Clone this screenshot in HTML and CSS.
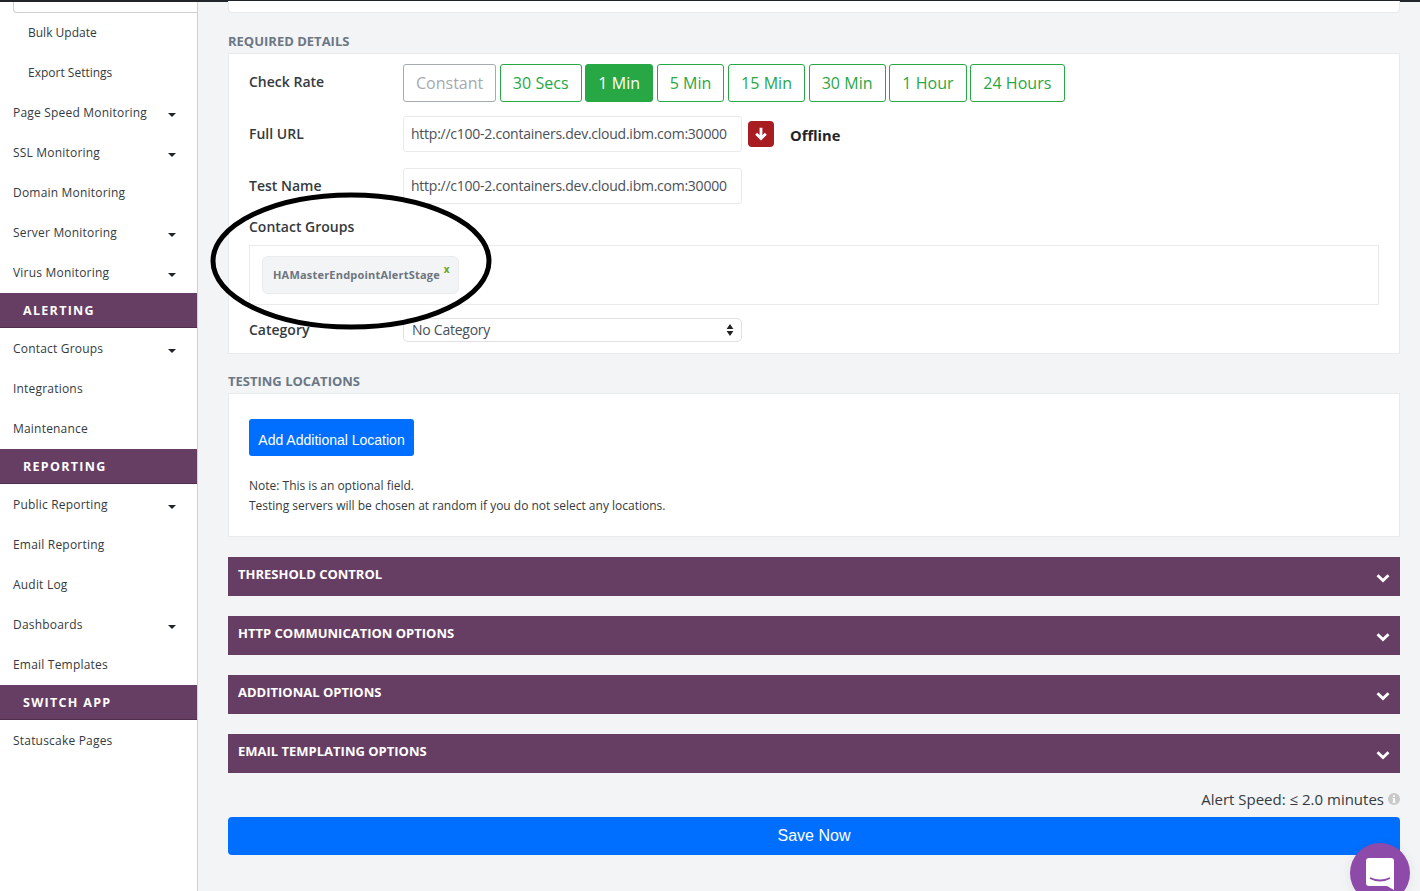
FILE: index.html
```html
<!DOCTYPE html>
<html>
<head>
    <title>New Uptime Test</title>
    <link rel="stylesheet" href="styles.css">
</head>
<body>
<div class="topline"></div>
<div class="page">
    <div class="sidebar">
        <div class="sidetab"></div>
        <a class="side-link sub">Bulk Update</a>
        <a class="side-link sub">Export Settings</a>
        <a class="side-link">Page Speed Monitoring<i class="caret"></i></a>
        <a class="side-link">SSL Monitoring<i class="caret"></i></a>
        <a class="side-link">Domain Monitoring</a>
        <a class="side-link">Server Monitoring<i class="caret"></i></a>
        <a class="side-link">Virus Monitoring<i class="caret"></i></a>
        <div class="side-head">ALERTING</div>
        <a class="side-link">Contact Groups<i class="caret"></i></a>
        <a class="side-link">Integrations</a>
        <a class="side-link">Maintenance</a>
        <div class="side-head">REPORTING</div>
        <a class="side-link">Public Reporting<i class="caret"></i></a>
        <a class="side-link">Email Reporting</a>
        <a class="side-link">Audit Log</a>
        <a class="side-link">Dashboards<i class="caret"></i></a>
        <a class="side-link">Email Templates</a>
        <div class="side-head">SWITCH APP</div>
        <a class="side-link">Statuscake Pages</a>
    </div>

    <div class="main">
        <div class="card stub"></div>

        <h5 class="section-title first">REQUIRED DETAILS</h5>
        <div class="card details">
            <div class="row rate-row">
                <label class="row-label">Check Rate</label>
                <div class="rates">
                    <button class="rate off">Constant</button>
                    <button class="rate">30 Secs</button>
                    <button class="rate on">1 Min</button>
                    <button class="rate">5 Min</button>
                    <button class="rate">15 Min</button>
                    <button class="rate">30 Min</button>
                    <button class="rate">1 Hour</button>
                    <button class="rate">24 Hours</button>
                </div>
            </div>
            <div class="row url-row">
                <label class="row-label">Full URL</label>
                <div class="text-input">http://c100-2.containers.dev.cloud.ibm.com:30000</div>
                <span class="status-icon">
                    <svg viewBox="0 0 14 14" width="14" height="14"><path d="M7 .8v10.4M2.2 6.8L7 11.6l4.8-4.8" fill="none" stroke="#fff" stroke-width="2.8"/></svg>
                </span>
                <span class="status-text">Offline</span>
            </div>
            <div class="row name-row">
                <label class="row-label">Test Name</label>
                <div class="text-input">http://c100-2.containers.dev.cloud.ibm.com:30000</div>
            </div>
            <label class="row-label block">Contact Groups</label>
            <div class="groups">
                <span class="chip">HAMasterEndpointAlertStage<sup class="chip-x">x</sup></span>
            </div>
            <div class="row cat-row">
                <label class="row-label">Category</label>
                <div class="select"><span class="select-text">No Category</span>
                    <svg class="updown" viewBox="0 0 8 12" width="8" height="12"><path d="M4 0l3.4 5H.6zM4 12L.6 7h6.8z" fill="#222"/></svg>
                </div>
            </div>
        </div>

        <h5 class="section-title">TESTING LOCATIONS</h5>
        <div class="card locations">
            <button class="add-btn">Add Additional Location</button>
            <p class="note">Note: This is an optional field.<br>Testing servers will be chosen at random if you do not select any locations.</p>
        </div>

        <div class="bar">THRESHOLD CONTROL<svg class="chev" viewBox="0 0 14 10" width="14" height="10"><path d="M1.5 2.2L7 7.6l5.5-5.4" fill="none" stroke="#fff" stroke-width="2.8"/></svg></div>
        <div class="bar">HTTP COMMUNICATION OPTIONS<svg class="chev" viewBox="0 0 14 10" width="14" height="10"><path d="M1.5 2.2L7 7.6l5.5-5.4" fill="none" stroke="#fff" stroke-width="2.8"/></svg></div>
        <div class="bar">ADDITIONAL OPTIONS<svg class="chev" viewBox="0 0 14 10" width="14" height="10"><path d="M1.5 2.2L7 7.6l5.5-5.4" fill="none" stroke="#fff" stroke-width="2.8"/></svg></div>
        <div class="bar">EMAIL TEMPLATING OPTIONS<svg class="chev" viewBox="0 0 14 10" width="14" height="10"><path d="M1.5 2.2L7 7.6l5.5-5.4" fill="none" stroke="#fff" stroke-width="2.8"/></svg></div>

        <div class="speed">Alert Speed: ≤ 2.0 minutes
            <svg viewBox="0 0 12 12" width="12" height="12"><circle cx="6" cy="6" r="6" fill="#c9c9c9"/><path d="M5 2.2h2v1.7H5zM4.6 5h2.4v3.7h.7v1H4.4v-1h.8V6h-.6z" fill="#fff"/></svg>
        </div>
        <button class="save-btn">Save Now</button>
    </div>
</div>

<!-- hand drawn circle over the screenshot -->
<svg class="scribble" viewBox="0 0 290 146" width="290" height="146">
    <ellipse cx="145" cy="73" rx="138" ry="66" fill="none" stroke="#000" stroke-width="5"/>
</svg>

<div class="chat">
    <svg viewBox="0 0 30 34" width="30" height="34"><path d="M4 1h22a3 3 0 0 1 3 3v29l-7-4H4a3 3 0 0 1-3-3V4a3 3 0 0 1 3-3z" fill="#fff"/><path d="M5 21c6 3.4 14 3.4 20 0" fill="none" stroke="#8e4aa8" stroke-width="2"/></svg>
</div>
</body>
</html>
```

FILE: styles.css
```css
* { box-sizing: border-box; }
html, body { margin: 0; padding: 0; height: 100%; overflow: hidden; }
body { background-color: #f3f4f6; font-family: "Open Sans", sans-serif; color: #212529; position: relative; }

.topline { height: 2px; background-color: #212529; }
.page { display: flex; height: 889px; }

/* left menu */
.sidebar { width: 198px; flex: none; background-color: #fff; border-right: 1px solid #ced0d3; }
.sidetab { height: 11px; margin-left: 13px; border: 1px solid #ced0d3; border-width: 0 0 1px 1px; border-bottom-left-radius: 4px; margin-right: -1px; }
.side-link { display: flex; align-items: center; justify-content: space-between; height: 40px; padding: 0 21px 0 13px; font-size: 12px; font-weight: 500; letter-spacing: 0.2px; color: #343a40; }
.side-link.sub { padding-left: 28px; font-weight: 400; letter-spacing: 0; }
.side-link:nth-child(2) { margin-top: -1px; }
.caret { width: 0; height: 0; margin-top: 5px; border-left: 4px solid transparent; border-right: 4px solid transparent; border-top: 4px solid #212529; }
.side-head { height: 35px; margin-top: 1px; padding-left: 23px; line-height: 36px; background-color: #673e63; border-bottom: 1px solid #4f2d4c; color: #fff; font-size: 12.5px; font-weight: 700; letter-spacing: 1.3px; }

/* content */
.main { width: 1172px; margin-left: 30px; }
.card { background-color: #fff; border: 1px solid #e9eaec; }
.stub { height: 12px; margin-top: -1px; border-top: 0; border-radius: 0 0 4px 4px; }
.section-title { margin: 21px 0 4px; height: 14px; line-height: 12px; font-size: 13px; font-weight: 700; color: #6b7785; }
.section-title.first { margin-top: 22px; }

.details { height: 301px; padding: 10px 20px 0; }
.row { display: flex; align-items: center; }
.row-label { width: 154px; flex: none; padding-bottom: 2px; font-size: 14px; font-weight: 600; color: #343a40; }
.row-label.block { display: block; height: 20px; line-height: 20px; margin-top: 13px; padding-bottom: 0; }
.rate-row { height: 38px; }
.rate-row .row-label { padding-bottom: 4px; }
.rates { display: flex; gap: 3.6px; }
.rate { height: 38px; padding: 0 12px; background-color: #fff; border: 1px solid #28a745; border-radius: 3px; color: #28a745; font-family: "Open Sans", sans-serif; font-size: 16px; letter-spacing: 0.05px; }
.rate.on { background-color: #28a745; color: #fff; }
.rate.off { border-color: #a5aab0; color: #a5aab0; letter-spacing: 0; }
.url-row { margin-top: 14px; height: 36px; }
.name-row { margin-top: 16px; height: 36px; }
.text-input { width: 339px; height: 36px; padding: 0 7px; line-height: 34px; border: 1px solid #e9eaec; border-radius: 3px; font-size: 14px; letter-spacing: -0.25px; color: #495057; white-space: nowrap; }
.status-icon { display: flex; align-items: center; justify-content: center; width: 26px; height: 26px; margin-left: 6px; background-color: #a71d22; border-radius: 4px; }
.status-text { margin-left: 16px; padding-top: 2px; font-size: 14.7px; font-weight: 700; color: #212529; }
.groups { height: 60px; margin-top: 8px; padding: 10px 12px; border: 1px solid #e9eaec; }
.chip { display: inline-block; width: 197px; height: 38px; padding-left: 10px; line-height: 36px; background-color: #f3f4f6; border: 1px solid #ebebed; border-radius: 6px; font-size: 11px; font-weight: 700; letter-spacing: 0.2px; color: #6c757d; white-space: nowrap; }
.chip-x { position: relative; top: -1px; margin-left: 4px; font-size: 10px; color: #6aa510; line-height: 0; }
.cat-row { margin-top: 13px; height: 24px; }
.select { display: flex; align-items: center; justify-content: space-between; width: 339px; height: 24px; padding: 0 7px 0 8px; border: 1px solid #dfe1e4; border-radius: 5px; font-size: 14px; letter-spacing: -0.25px; color: #495057; }
.select-text { padding-bottom: 2px; }

.locations { height: 144px; padding: 25px 20px 0; }
.add-btn { display: block; width: 165px; height: 37px; padding: 4px 0 0; background-color: #006fff; border: 0; border-radius: 3px; color: #fff; font-family: "Liberation Sans", sans-serif; font-size: 14px; }
.note { margin: 19px 0 0; padding-top: 1px; font-size: 12px; line-height: 20px; color: #343a40; }

.bar { display: flex; align-items: center; justify-content: space-between; height: 39px; margin-top: 20px; padding: 0 10px 6px; background-color: #673e63; color: #fff; font-size: 13px; font-weight: 700; }
.chev { position: relative; top: 4px; margin-right: 0; }
.speed { display: flex; justify-content: flex-end; align-items: center; gap: 4px; height: 20px; margin-top: 16px; font-size: 15px; color: #343a40; }
.save-btn { display: block; width: 100%; height: 38px; margin-top: 8px; background-color: #006fff; border: 0; border-radius: 4px; color: #fff; font-family: "Liberation Sans", sans-serif; font-size: 16px; }

/* overlays */
.scribble { position: absolute; left: 206px; top: 188px; }
.chat { position: absolute; left: 1350px; top: 843px; display: flex; justify-content: center; padding-top: 14px; width: 60px; height: 60px; border-radius: 50%; background-color: #8e4aa8; box-shadow: 0 1px 12px rgba(0, 0, 0, 0.08); }
```
